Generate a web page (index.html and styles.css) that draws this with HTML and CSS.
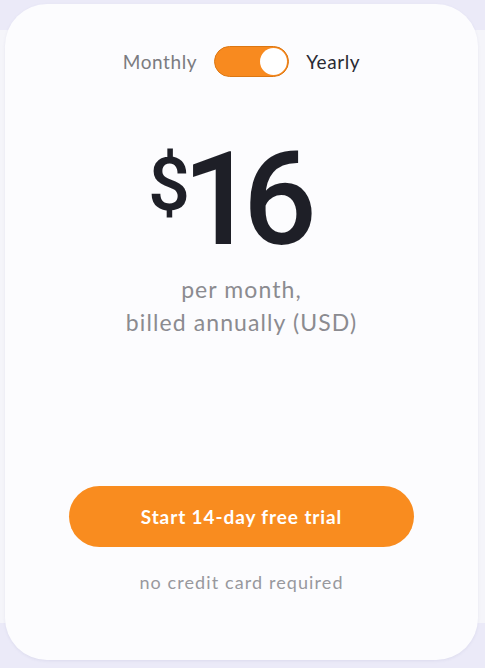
FILE: index.html
```html
<!DOCTYPE html>
<html lang="en">
<head>
<meta charset="utf-8">
<title>Pricing</title>
<link rel="stylesheet" href="styles.css">
</head>
<body>
<div class="page">
  <div class="band"></div>
  <div class="card">
    <div class="toggle-row">
      <span class="label label-off">Monthly</span>
      <span class="switch"><span class="knob"></span></span>
      <span class="label label-on">Yearly</span>
    </div>
    <div class="price">
      <span class="currency">$</span><span class="amount">16</span>
    </div>
    <div class="period">
      <span class="period-line">per month,</span>
      <span class="period-line">billed annually (USD)</span>
    </div>
    <div class="spacer"></div>
    <button class="cta">Start 14-day free trial</button>
    <p class="note">no credit card required</p>
  </div>
</div>
</body>
</html>
```

FILE: styles.css
```css
html, body {
  margin: 0;
  padding: 0;
  height: 100%;
}
body {
  background: #ebeaf8;
  font-family: Lato, "Noto Sans", sans-serif;
  overflow: hidden;
}
.page {
  position: relative;
  width: 485px;
  height: 668px;
}
.band {
  position: absolute;
  left: 0;
  right: 0;
  top: 30px;
  height: 593px;
  background: #f5f5fa;
}
.card {
  position: absolute;
  left: 5px;
  top: 4px;
  width: 473px;
  height: 656px;
  box-sizing: border-box;
  background: #fcfcfe;
  border-radius: 42px;
  box-shadow: 0 1px 3px rgba(120, 120, 170, 0.12);
  display: flex;
  flex-direction: column;
  align-items: center;
  padding-top: 42px;
}
.toggle-row {
  display: flex;
  align-items: center;
  gap: 17px;
}
.label {
  font-size: 19px;
  line-height: 31px;
  letter-spacing: 0.6px;
}
.label-off { color: #7b7b80; }
.label-on { color: #2a2a33; }
.switch {
  width: 75px;
  height: 31px;
  box-sizing: border-box;
  border-radius: 16px;
  background: #f88a1f;
  border: 1.5px solid #dc7712;
  display: flex;
  justify-content: flex-end;
  align-items: center;
  padding-right: 1px;
}
.knob {
  width: 27px;
  height: 27px;
  border-radius: 50%;
  background: #ffffff;
}
.price {
  display: flex;
  align-items: flex-start;
  margin-top: 62px;
  color: #1e1f27;
  height: 110px;
  font-family: Roboto, Lato, sans-serif;
  margin-right: 38px;
}
.currency {
  font-size: 74px;
  font-weight: 500;
  line-height: 74px;
  margin-top: 9px;
  margin-left: 7px;
  letter-spacing: -8px;
}
.amount {
  font-size: 130px;
  font-weight: 500;
  line-height: 100px;
  letter-spacing: -13px;
  margin-top: 11px;
}
.period {
  margin-top: 29px;
  display: flex;
  flex-direction: column;
  align-items: center;
  gap: 11px;
  font-size: 23px;
  line-height: 22px;
  letter-spacing: 1.1px;
  color: #8b8b90;
}
.period-line { display: block; }
.spacer { flex: 1; }
.cta {
  width: 345px;
  height: 61px;
  border: none;
  border-radius: 31px;
  background: #f98c1f;
  color: #ffffff;
  font-family: inherit;
  font-size: 19px;
  font-weight: 700;
  letter-spacing: 0.9px;
}
.note {
  margin: 23px 0 66px;
  font-size: 18px;
  line-height: 24px;
  letter-spacing: 1.1px;
  color: #98989d;
}
```
